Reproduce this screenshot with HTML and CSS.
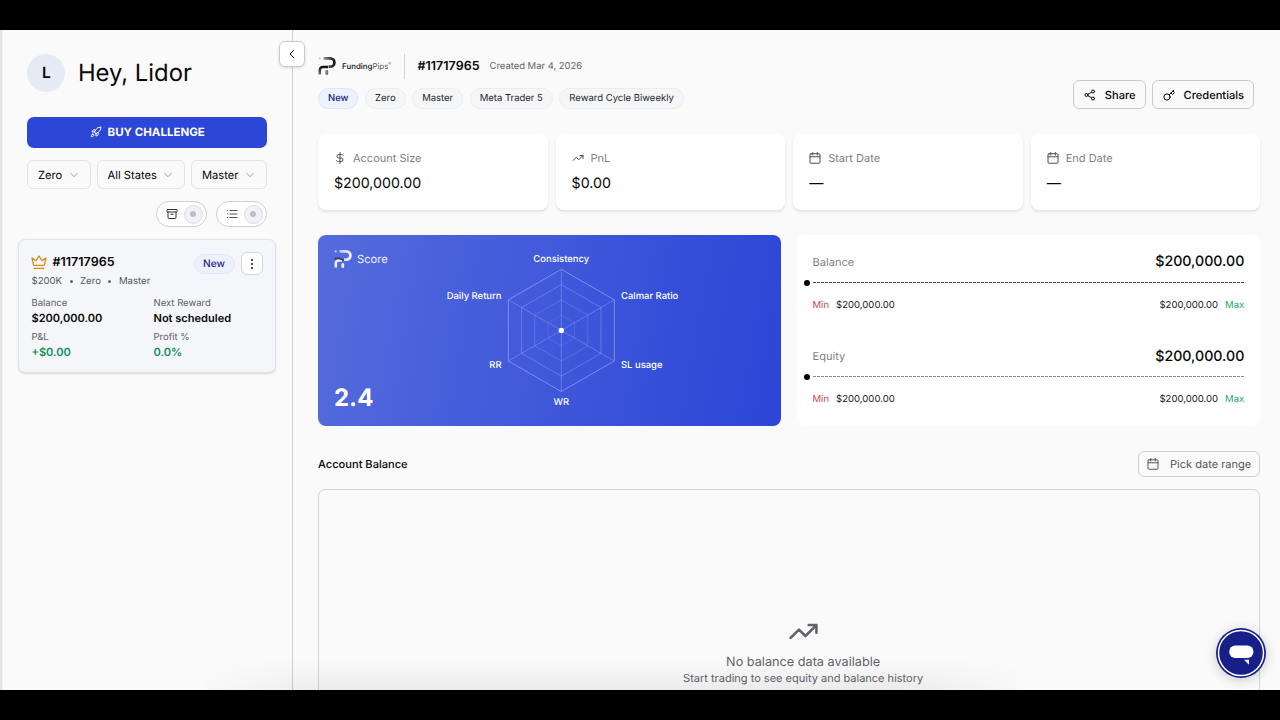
FILE: index.html
```html
<!DOCTYPE html>
<html lang="en">
<head>
<meta charset="utf-8">
<title>Account dashboard</title>
<link rel="stylesheet" href="styles.css">
</head>
<body>
<svg class="defs" aria-hidden="true">
  <defs>
    <linearGradient id="ink" x1="0" y1="0" x2="1" y2="0"><stop offset="0" stop-color="#999"/><stop offset=".45" stop-color="#555"/><stop offset="1" stop-color="#17171b"/></linearGradient>
    <linearGradient id="ink2" x1="0" y1="0" x2="0" y2="1"><stop offset="0" stop-color="#111"/><stop offset="1" stop-color="#77777b"/></linearGradient>
    <linearGradient id="pale" x1="0" y1="0" x2="1" y2="0"><stop offset="0" stop-color="#b9c4f2"/><stop offset="1" stop-color="#f4f6ff"/></linearGradient>
    <symbol id="trend" viewBox="0 0 24 24"><path d="M2 17l6.5-6.5 5 5L22 7M16 7h6v6"/></symbol>
    <symbol id="calendar" viewBox="0 0 24 24"><rect x="2" y="3.500" width="20" height="19" rx="2"/><path d="M7.500 1v5M16.500 1v5M2 9.500h20"/></symbol>
    <symbol id="down" viewBox="0 0 24 24"><path d="M4 8l8 8 8-8"/></symbol>
  </defs>
</svg>
<div class="screen">
  <aside class="sidebar">
    <div class="greeting"><span class="avatar">L</span><h1>Hey, Lidor</h1></div>
    <button class="buy">
      <svg class="icon rocket" viewBox="0 0 24 24"><path d="M4.500 16.500c-1.500 1.300-2 5-2 5s3.700-.5 5-2c.7-.8.7-2.100-.1-2.900a2.200 2.200 0 0 0-2.900-.1zM12 15l-3-3a22 22 0 0 1 2-4A12.900 12.900 0 0 1 22 2c0 2.700-.8 7.500-6 11a22 22 0 0 1-4 2zM9 12H4s.6-3 2-4c1.600-1.100 5 0 5 0M12 15v5s3-.6 4-2c1.100-1.600 0-5 0-5"/></svg>
      <span>BUY CHALLENGE</span>
    </button>
    <div class="filters">
      <button class="select s1"><span>Zero</span><svg class="icon chev"><use href="#down"/></svg></button>
      <button class="select s2"><span>All States</span><svg class="icon chev"><use href="#down"/></svg></button>
      <button class="select s3"><span>Master</span><svg class="icon chev"><use href="#down"/></svg></button>
    </div>
    <div class="toggles">
      <div class="toggle"><svg class="icon" viewBox="0 0 24 24"><rect x="2" y="3" width="20" height="5" rx="1"/><path d="M4 8v11a2 2 0 0 0 2 2h12a2 2 0 0 0 2-2V8M9.500 12.500h5"/></svg><span class="knob"></span></div>
      <div class="toggle"><svg class="icon list" viewBox="0 0 24 24"><path d="M8 5h14M8 12h14M8 19h14M3 5h.1M3 12h.1M3 19h.1"/></svg><span class="knob"></span></div>
    </div>
    <section class="account">
      <div class="account-head">
        <svg class="crown" viewBox="0 0 24 24"><path d="M12 3l4.500 7L22.500 6l-2.500 11H4L1.500 6l6 4zM4.500 21.500h15"/></svg>
        <strong>#11717965</strong>
        <span class="new">New</span>
        <button class="more"><i></i><i></i><i></i></button>
      </div>
      <div class="meta"><span>$200K</span><b></b><span>Zero</span><b></b><span>Master</span></div>
      <dl class="facts">
        <div><dt>Balance</dt><dd>$200,000.00</dd></div>
        <div><dt>Next Reward</dt><dd>Not scheduled</dd></div>
        <div><dt>P&amp;L</dt><dd class="up">+$0.00</dd></div>
        <div><dt>Profit %</dt><dd class="up">0.0%</dd></div>
      </dl>
    </section>
    <button class="collapse"><svg class="icon" viewBox="0 0 24 24"><path d="M15 5l-7 7 7 7"/></svg></button>
  </aside>

  <main class="main">
    <header class="header">
      <div>
        <div class="title">
          <svg class="mark" viewBox="0 0 18 20"><circle cx="1.700" cy="2.400" r="1.100" fill="#ccc"/><path d="M5.500 2.300h6.700a4.200 4.200 0 0 1 0 8.400H10.500" fill="none" stroke="url(#ink)" stroke-width="2.700"/><path d="M1.800 18.500v-4.500a3 3 0 0 1 3-3H10" fill="none" stroke="url(#ink2)" stroke-width="2.500"/><path d="M8.800 15.500v2.200" stroke="#77777b" stroke-width="2.800" stroke-linecap="round"/></svg>
          <span class="brand"><b>Funding</b>Pips<sup>®</sup></span>
          <span class="rule"></span>
          <strong>#11717965</strong>
          <span class="created">Created Mar 4, 2026</span>
        </div>
        <div class="chips"><span class="chip blue">New</span><span class="chip">Zero</span><span class="chip">Master</span><span class="chip">Meta Trader 5</span><span class="chip">Reward Cycle Biweekly</span></div>
      </div>
      <div class="actions">
        <button class="action"><svg class="icon" viewBox="0 0 24 24"><circle cx="18" cy="5" r="3"/><circle cx="5" cy="12" r="3"/><circle cx="18" cy="19" r="3"/><path d="M8 10.500l7-4M8 13.500l7 4"/></svg><span>Share</span></button>
        <button class="action"><svg class="icon" viewBox="0 0 24 24"><circle cx="8" cy="16" r="6.300"/><path d="M12.500 11.500L21.500 2.500M16 8l3 3 4-4-3-3"/></svg><span>Credentials</span></button>
      </div>
    </header>

    <section class="stats">
      <div class="stat"><h2><svg class="icon" viewBox="0 0 24 24"><path d="M12 1v22M18.500 6.500C17.500 5.500 16 5 14.500 5h-5a3.500 3.500 0 0 0 0 7h5a3.500 3.500 0 0 1 0 7H9c-1.500 0-3-.5-4-1.500"/></svg>Account Size</h2><p>$200,000.00</p></div>
      <div class="stat"><h2><svg class="icon"><use href="#trend"/></svg>PnL</h2><p>$0.00</p></div>
      <div class="stat"><h2><svg class="icon"><use href="#calendar"/></svg>Start Date</h2><p>—</p></div>
      <div class="stat"><h2><svg class="icon"><use href="#calendar"/></svg>End Date</h2><p>—</p></div>
    </section>

    <div class="panels">
      <section class="score">
        <div class="score-side">
          <div class="score-title"><svg class="mark" viewBox="0 0 18 20"><circle cx="1.700" cy="2.400" r="1.100" fill="#c5cef5"/><path d="M5.500 2.300h6.700a4.200 4.200 0 0 1 0 8.400H10" fill="none" stroke="url(#pale)" stroke-width="2.800"/><path d="M1.800 18.500v-4.500a3 3 0 0 1 3-2.500H8" fill="none" stroke="#e8ecfd" stroke-width="2.600"/><path d="M.5 10c3-1.500 6-.6 9 1.200" fill="none" stroke="#333a55" stroke-width="1.600"/><path d="M8.800 15.500v2.200" stroke="#e8ecfd" stroke-width="2.800" stroke-linecap="round"/></svg><span>Score</span></div>
          <div class="value">2.4</div>
        </div>
        <svg class="radar" viewBox="0 0 260 191">
          <g class="web">
            <path class="w4" d="M130.300 34.300l53 30.500v61.200l-53 30.500-53-30.500V64.800z"/>
            <path class="w3" d="M130.300 49.600l39.700 22.900v45.800l-39.700 22.900-39.700-22.900V72.500z"/>
            <path class="w2" d="M130.300 64.900l26.500 15.300v30.600l-26.500 15.300-26.500-15.300V80.200z"/>
            <path class="w1" d="M130.300 80.200l13.200 7.600v15.300l-13.200 7.600-13.200-7.600V87.800z"/>
            <path class="w3" d="M130.300 34.300v122.200M77.300 64.800l106 61.200M183.300 64.800l-106 61.200"/>
          </g>
          <circle cx="130.300" cy="95.400" r="2.700" fill="#fff"/>
          <g class="labels">
            <text x="130.300" y="26.800" text-anchor="middle">Consistency</text>
            <text x="190" y="64.200">Calmar Ratio</text>
            <text x="190" y="133">SL usage</text>
            <text x="130.300" y="170.200" text-anchor="middle">WR</text>
            <text x="70.500" y="133" text-anchor="end">RR</text>
            <text x="70.500" y="64.200" text-anchor="end">Daily Return</text>
          </g>
        </svg>
      </section>
      <section class="levels">
        <div class="level">
          <div class="row"><h3>Balance</h3><strong>$200,000.00</strong></div>
          <div class="track"></div>
          <div class="range"><span class="min">Min</span><span>$200,000.00</span><span class="right">$200,000.00</span><span class="max">Max</span></div>
        </div>
        <div class="level">
          <div class="row"><h3>Equity</h3><strong>$200,000.00</strong></div>
          <div class="track light"></div>
          <div class="range"><span class="min">Min</span><span>$200,000.00</span><span class="right">$200,000.00</span><span class="max">Max</span></div>
        </div>
      </section>
    </div>

    <div class="chart-head"><h2>Account Balance</h2><button class="date"><svg class="icon"><use href="#calendar"/></svg><span>Pick date range</span></button></div>
    <section class="chart">
      <svg class="icon"><use href="#trend"/></svg>
      <h3>No balance data available</h3>
      <p>Start trading to see equity and balance history</p>
    </section>
  </main>
  <div class="shade"></div>
  <button class="chat"><svg viewBox="0 0 50 50"><circle cx="25" cy="25" r="25" fill="#172089"/><circle cx="25" cy="25" r="22.500" fill="none" stroke="#fff" stroke-width="1.500"/><rect x="13.200" y="17.500" width="24.300" height="12.500" rx="6.200" fill="#fff"/><path d="M28 31.700h5v5z" fill="#fff"/></svg></button>
</div>
</body>
</html>
```
FILE: styles.css
```css
* { box-sizing: border-box; }
body { margin: 0; height: 720px; padding-top: 30px; background: #000; color: #080809; font-family: Inter, "Liberation Sans", sans-serif; text-rendering: geometricPrecision; overflow: hidden; }
h1, h2, h3, p, dl, dd { margin: 0; font-weight: 400; }
button { font: inherit; color: inherit; margin: 0; padding: 0; text-rendering: inherit; }
.defs { position: absolute; width: 0; height: 0; }
.icon { display: block; flex: none; width: 12px; height: 12px; fill: none; stroke: currentColor; stroke-width: 2; stroke-linecap: round; stroke-linejoin: round; }
.screen { position: relative; display: flex; height: 660px; background: #fafafa; overflow: hidden; }

.sidebar { position: relative; flex: none; width: 293px; padding: 23.500px 25px 0 25.400px; border-left: 2px solid #e4e4e5; border-right: 1px solid #cfcfd1; box-shadow: inset 1px 0 #f3f3f3; }
.greeting { display: flex; align-items: center; gap: 12.500px; height: 38px; }
.avatar { display: grid; place-items: center; width: 38px; height: 38px; border-radius: 50%; background: #e5eaf4; font-size: 15.500px; font-weight: 600; }
h1 { font-size: 23.800px; line-height: 38px; }
.buy { display: flex; align-items: center; justify-content: center; gap: 6px; width: 239.600px; height: 31.500px; margin-top: 25px; border: 0; border-radius: 7px; background: #2c46d8; color: #fff; font-size: 11.500px; font-weight: 700; }
.filters { display: flex; gap: 6px; width: 239.600px; margin-top: 12px; }
.select { display: flex; align-items: center; justify-content: space-between; height: 29px; padding: 0 11px 0 9.500px; border: 1px solid #e3e3e5; border-radius: 6px; background: #fafafa; font-size: 11.200px; }
.s1 { width: 63.600px; } .s2 { width: 88.500px; } .s3 { width: 75.500px; }
.chev { width: 10px; height: 10px; color: #8d8d92; }
.toggles { display: flex; justify-content: flex-end; gap: 9.500px; width: 239.600px; margin-top: 12px; }
.toggle { display: flex; align-items: center; justify-content: space-between; width: 50.500px; height: 26px; padding: 0 3px 0 8.500px; border: 1px solid #cfcfd2; border-radius: 13px; background: #fff; color: #333338; }
.list { stroke-width: 1.700; }
.knob { display: grid; place-items: center; width: 19px; height: 19px; border: 1px solid #dcdce1; border-radius: 50%; background: #f1f2f6; }
.knob::before { content: ""; width: 6px; height: 6px; border-radius: 50%; background: #bdbec2; }
.account { width: 258px; height: 134.500px; margin: 11.500px 0 0 -9.400px; padding: 12.500px 12px 0 12.500px; border: 1px solid #dfe3ea; border-radius: 7px; background: #f4f6f9; box-shadow: 0 1px 2px #0002; }
.account-head { display: flex; align-items: center; height: 23px; }
.crown { width: 16px; height: 16px; margin: -3px 6px 0 -1px; fill: none; stroke: #d48a1c; stroke-width: 1.900; stroke-linejoin: round; stroke-linecap: round; }
.account-head strong { font-size: 12.500px; font-weight: 600; line-height: 20px; margin-top: -1.500px; }
.new { display: grid; place-items: center; width: 41px; height: 20px; margin-left: auto; border: 1px solid #e3e9fd; border-radius: 10px; background: #edf1ff; color: #1b2683; font-size: 10.200px; font-weight: 500; }
.more { display: flex; flex-direction: column; align-items: center; justify-content: center; gap: 2px; width: 22.500px; height: 22.500px; margin-left: 6px; border: 1px solid #d5d6d9; border-radius: 6px; background: #fff; }
.more i { width: 2px; height: 2px; border-radius: 50%; background: #111; }
.meta { display: flex; align-items: center; height: 12px; padding-top: 1px; color: #55565c; font-size: 9.600px; }
.meta b { width: 3px; height: 3px; margin: 0 7.500px; border-radius: 50%; background: #66676d; }
.facts { display: grid; grid-template-columns: 122px 1fr; row-gap: 5px; margin-top: 9.500px; }
dt { color: #606168; font-size: 9.500px; line-height: 14px; }
dd { font-size: 11.050px; font-weight: 600; line-height: 15.500px; }
.up { color: #109058; }
.collapse { position: absolute; top: 11px; right: -13px; display: grid; place-items: center; width: 26px; height: 26px; border: 1px solid #cacacc; border-radius: 6px; background: #fff; box-shadow: 0 1px 3px #0002; }

.main { flex: 1; min-width: 0; padding: 23px 19.700px 0 25px; }
.header { display: flex; justify-content: space-between; height: 81px; }
.title { display: flex; align-items: center; height: 26px; }
.mark { flex: none; width: 18px; height: 20px; }
.brand { width: 50px; margin-left: 6px; font-size: 7.900px; color: #555; white-space: nowrap; }
.brand b { font-weight: 500; color: #111; }
.brand sup { font-size: 4px; line-height: 0; }
.rule { width: 1px; height: 25px; margin: 0 12.500px 0 12px; background: #d2d2d5; }
.title strong { width: 63px; font-size: 12.500px; font-weight: 600; }
.created { margin-left: 9px; color: #606168; font-size: 9.450px; line-height: 14px; margin-top: 1px; }
.chips { display: flex; gap: 6.500px; margin-top: 9px; }
.chip { height: 20.500px; padding: 0 9px; border: 1px solid #ebecf1; border-radius: 11px; background: #f5f6f8; color: #25262c; font-size: 9.500px; line-height: 20px; white-space: nowrap; }
.blue { background: #edf2ff; border-color: #dce5fb; color: #16207c; font-weight: 500; }
.actions { display: flex; gap: 6px; margin: 27px 6.300px 0 0; }
.action { display: flex; align-items: center; gap: 9px; height: 29px; padding: 0 9px 0 10px; border: 1px solid #cbccce; border-radius: 6px; background: #fafafa; font-size: 11.100px; font-weight: 500; }
.stats { display: grid; grid-template-columns: repeat(4, 1fr); gap: 8px; }
.stat { height: 75.500px; padding: 15px 16px; border-radius: 8px; background: #fff; box-shadow: 0 2px 3px #00000018; }
.stat h2 { display: flex; align-items: center; gap: 7px; height: 17px; color: #7e7f84; font-size: 11px; }
.stat .icon { color: #4c4d53; }
.stat p { margin-top: 7.500px; font-size: 14.200px; line-height: 20px; }
.panels { display: flex; gap: 15.500px; margin-top: 25px; }
.score { display: flex; width: 463px; height: 191.500px; border-radius: 8px; background: linear-gradient(100deg, #556bdd, #2b45d7); color: #fff; }
.score-side { display: flex; flex-direction: column; justify-content: space-between; width: 113px; padding: 14.500px 0 12.500px 16px; }
.score-title { display: flex; align-items: center; gap: 5px; font-size: 11.200px; color: #eaf0ff; }
.value { font-size: 24px; line-height: 32px; font-weight: 700; }
.radar { width: 260px; height: 191px; }
.web { fill: none; stroke: #a9b8ff; stroke-width: .8; }
.w4 { opacity: .7; } .w3 { opacity: .45; } .w2 { opacity: .3; } .w1 { opacity: .2; }
.labels { fill: #fff; font-size: 9.450px; font-weight: 500; }
.levels { flex: 1; height: 191.500px; padding: 16px 16px 0; border-radius: 8px; background: #fff; }
.level { height: 94.500px; }
.row { display: flex; justify-content: space-between; align-items: center; height: 21px; padding-top: 1px; }
.row h3 { color: #7e7f84; font-size: 11.100px; }
.row strong { font-size: 14.200px; font-weight: 500; }
.track { position: relative; height: 1px; margin-top: 10px; background: repeating-linear-gradient(90deg, #444 0 3px, #fff0 3px 4px); }
.light { background: repeating-linear-gradient(90deg, #888 0 3px, #fff0 3px 4px); }
.track::before { content: ""; position: absolute; left: -9px; top: -2px; width: 6px; height: 6px; border-radius: 50%; background: #000; }
.range { display: flex; gap: 7px; margin-top: 16px; font-size: 9.550px; line-height: 14px; color: #222; }
.right { margin-left: auto; }
.min { color: #c54950; } .max { color: #25ad64; }
.chart-head { display: flex; justify-content: space-between; align-items: center; height: 26px; margin-top: 25px; }
.chart-head h2 { font-size: 11.100px; font-weight: 500; }
.date { display: flex; align-items: center; gap: 11px; height: 26px; padding: 0 8px 0 8px; border: 1px solid #cfcfd2; border-radius: 6px; background: #fafafa; color: #55565b; font-size: 11.050px; }
.chart { display: flex; flex-direction: column; align-items: center; height: 330px; margin-top: 11.500px; padding: 126px 0 0 28px; border: 1px solid #d5d5d8; border-radius: 7px; color: #62636a; }
.chart .icon { width: 31px; height: 31px; }
.chart h3 { margin-top: 6px; font-size: 12.700px; line-height: 20px; }
.chart p { margin-top: -1.500px; font-size: 11px; line-height: 14px; }
.shade { position: absolute; left: 200px; right: 250px; bottom: 0; height: 30px; background: linear-gradient(#0000, #0000000f); mask-image: linear-gradient(90deg, transparent, #000 15%, #000 85%, transparent); pointer-events: none; }
.chat { position: absolute; right: 14px; bottom: 12px; width: 50px; height: 50px; border: 0; border-radius: 50%; background: none; box-shadow: 0 2px 12px #0003; }
.chat svg { display: block; width: 50px; height: 50px; }
```
